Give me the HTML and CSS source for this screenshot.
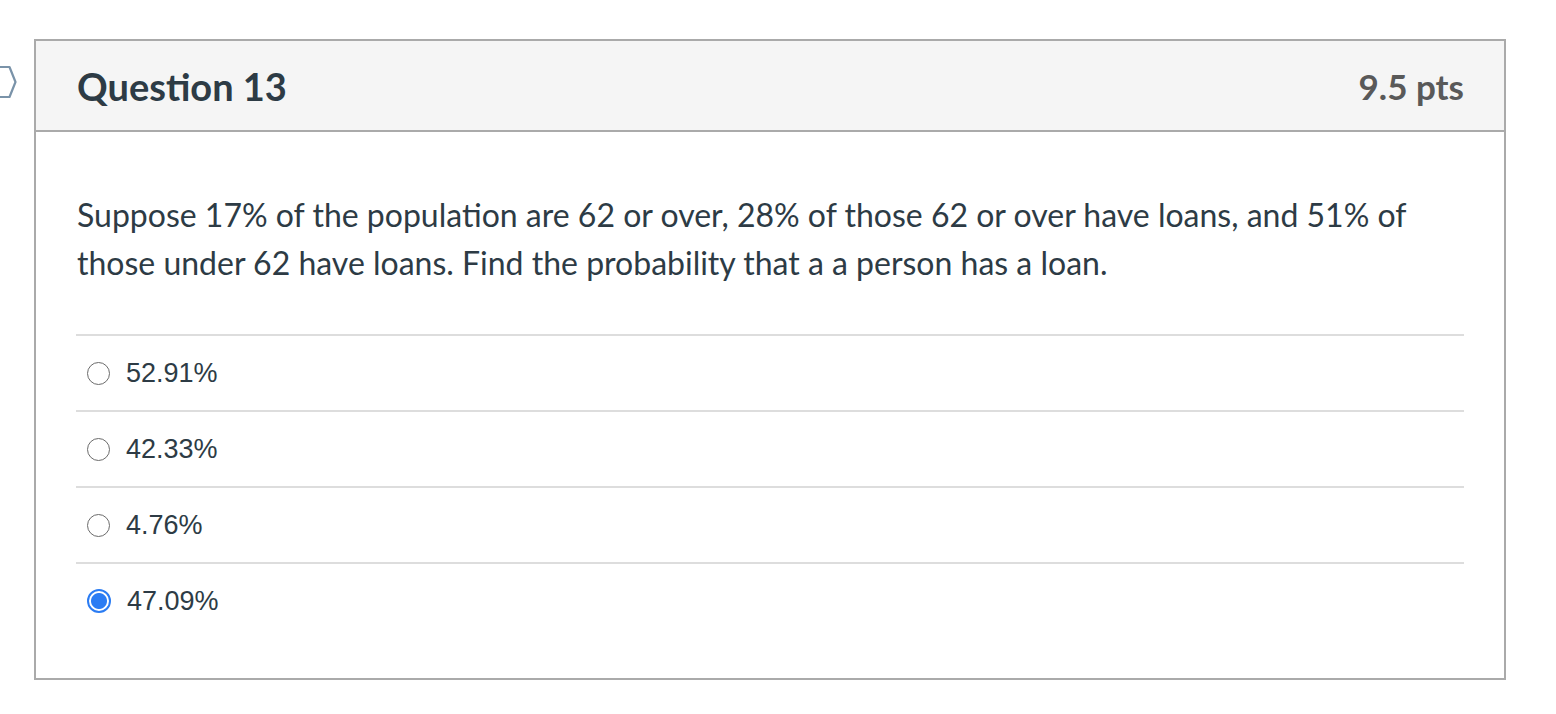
FILE: index.html
```html
<!DOCTYPE html>
<html>
<head>
<meta charset="utf-8">
<link rel="stylesheet" href="styles.css">
</head>
<body>
<div class="page">
  <div class="flag">
    <svg width="34" height="120" viewBox="0 0 34 120">
      <path d="M-4 28 L9.5 28 L15.5 43 L9.5 58 L-4 58" fill="none" stroke="#7a93a9" stroke-width="2.2" stroke-linejoin="round"/>
    </svg>
  </div>
  <div class="card">
    <div class="card-header">
      <h2 class="title">Question 13</h2>
      <div class="pts">9.5 pts</div>
    </div>
    <div class="card-body">
      <p class="question">Suppose 17% of the population are 62 or over, 28% of those 62 or over have loans, and 51% of those under 62 have loans. Find the probability that a a person has a loan.</p>
      <div class="answers">
        <div class="answer"><span class="radio"></span><span class="label">52.91%</span></div>
        <div class="answer"><span class="radio"></span><span class="label">42.33%</span></div>
        <div class="answer"><span class="radio"></span><span class="label">4.76%</span></div>
        <div class="answer"><span class="radio checked"></span><span class="label">47.09%</span></div>
      </div>
    </div>
  </div>
</div>
</body>
</html>
```

FILE: styles.css
```css
html, body {
  margin: 0;
  padding: 0;
  background: #ffffff;
}
.page {
  display: flex;
  align-items: flex-start;
  padding-top: 39px;
}
.flag {
  width: 34px;
  flex: none;
}
.flag svg {
  display: block;
}
.card {
  width: 1468px;
  border: 2px solid #aaaaaa;
  font-family: Lato, "Liberation Sans", sans-serif;
  color: #2d3b45;
}
.card-header {
  display: flex;
  align-items: center;
  justify-content: space-between;
  height: 89px;
  padding: 0 40px 0 41px;
  background: #f5f5f5;
  border-bottom: 2px solid #aaaaaa;
}
.title {
  margin: 0;
  font-size: 38px;
  font-weight: 700;
  color: #2d3b45;
}
.pts {
  font-size: 35px;
  font-weight: 700;
  color: #595959;
}
.card-body {
  padding: 59px 40px 40px 40px;
}
.question {
  margin: 0 0 47px 1px;
  font-size: 32px;
  line-height: 48px;
}
.answers {
  display: flex;
  flex-direction: column;
}
.answer {
  display: flex;
  align-items: center;
  gap: 16px;
  height: 76px;
  border-top: 2px solid #dddddd;
  padding-left: 11px;
  box-sizing: border-box;
}
.radio {
  width: 21px;
  height: 21px;
  border: 1.5px solid #6b6b6b;
  border-radius: 50%;
  box-sizing: content-box;
  flex: none;
}
.radio.checked {
  width: 20px;
  height: 20px;
  border: 2px solid #2b7cf3;
  background: radial-gradient(circle, #2b7cf3 0 7.5px, #ffffff 8.5px);
}
.label {
  font-family: "Liberation Sans", Arial, sans-serif;
  font-size: 27px;
  color: #2d3b45;
}
```
